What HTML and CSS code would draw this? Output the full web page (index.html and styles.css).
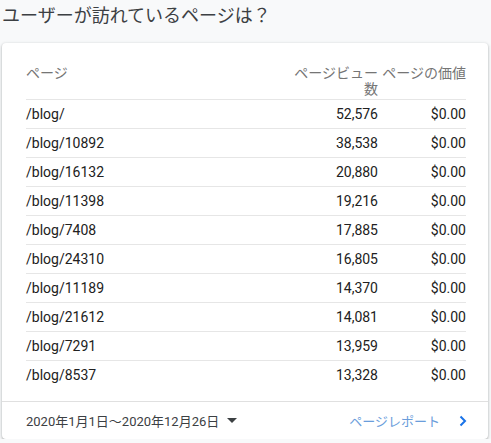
FILE: index.html
```html
<!DOCTYPE html>
<html lang="ja">
<head>
<meta charset="utf-8">
<link rel="stylesheet" href="styles.css">
</head>
<body>
<h2 class="title">ユーザーが訪れているページは？</h2>
<div class="card">
  <div class="table">
    <div class="row head">
      <div class="cell">ページ</div>
      <div class="cell num">ページビュー数</div>
      <div class="cell num">ページの価値</div>
    </div>
    <div class="row"><div class="cell">/blog/</div><div class="cell num">52,576</div><div class="cell num">$0.00</div></div>
    <div class="row"><div class="cell">/blog/10892</div><div class="cell num">38,538</div><div class="cell num">$0.00</div></div>
    <div class="row"><div class="cell">/blog/16132</div><div class="cell num">20,880</div><div class="cell num">$0.00</div></div>
    <div class="row"><div class="cell">/blog/11398</div><div class="cell num">19,216</div><div class="cell num">$0.00</div></div>
    <div class="row"><div class="cell">/blog/7408</div><div class="cell num">17,885</div><div class="cell num">$0.00</div></div>
    <div class="row"><div class="cell">/blog/24310</div><div class="cell num">16,805</div><div class="cell num">$0.00</div></div>
    <div class="row"><div class="cell">/blog/11189</div><div class="cell num">14,370</div><div class="cell num">$0.00</div></div>
    <div class="row"><div class="cell">/blog/21612</div><div class="cell num">14,081</div><div class="cell num">$0.00</div></div>
    <div class="row"><div class="cell">/blog/7291</div><div class="cell num">13,959</div><div class="cell num">$0.00</div></div>
    <div class="row last"><div class="cell">/blog/8537</div><div class="cell num">13,328</div><div class="cell num">$0.00</div></div>
  </div>
  <div class="footer">
    <div class="date">2020年1月1日〜2020年12月26日<span class="caret"></span></div>
    <a class="report">ページレポート
      <svg class="chev" width="8" height="12" viewBox="0 0 8 12"><path d="M1.5 1.5 L6 6 L1.5 10.5" fill="none" stroke="#1a73e8" stroke-width="2"/></svg>
    </a>
  </div>
</div>
</body>
</html>
```
FILE: styles.css
```css
html, body {
  margin: 0;
  padding: 0;
  background: #f8f9fa;
  font-family: Roboto, "Noto Sans CJK JP", sans-serif;
}
.title {
  margin: 0 0 15px;
  padding-left: 2px;
  font-size: 18px;
  line-height: 28px;
  font-weight: 400;
  color: #3c4043;
  font-family: "Noto Sans CJK JP", sans-serif;
}
.card {
  margin-left: 2px;
  width: 486px;
  height: 396px;
  background: #fff;
  border-radius: 4px;
  box-shadow: 0 1px 2px rgba(60,64,67,.3), 0 1px 3px 1px rgba(60,64,67,.12);
  display: flex;
  flex-direction: column;
}
.table {
  padding: 21px 22px 11px 24px;
  flex: 1;
}
.row {
  display: grid;
  grid-template-columns: 1fr 88px 88px;
  height: 28px;
  align-items: center;
  border-bottom: 1px solid #e6e6e6;
  font-size: 14px;
  color: #212121;
}
.row.last { border-bottom: none; }
.row.head {
  height: auto;
  align-items: start;
  padding-bottom: 3px;
  font-size: 14px;
  line-height: 16px;
  color: #757575;
  font-family: "Noto Sans CJK JP", sans-serif;
}
.num { text-align: right; }
.footer {
  border-top: 1px solid #e0e0e0;
  height: 37px;
  display: flex;
  align-items: center;
  justify-content: space-between;
  padding: 0 21px 0 24px;
  font-size: 13px;
}
.date {
  color: #3c4043;
  display: flex;
  align-items: center;
}
.caret {
  display: inline-block;
  width: 0;
  height: 0;
  border-left: 5px solid transparent;
  border-right: 5px solid transparent;
  border-top: 5px solid #3c4043;
  margin-left: 8px;
}
.report {
  color: #6a9ddb;
  display: flex;
  align-items: center;
  font-family: "Noto Sans CJK JP", sans-serif;
}
.chev { margin-left: 19px; }
```
